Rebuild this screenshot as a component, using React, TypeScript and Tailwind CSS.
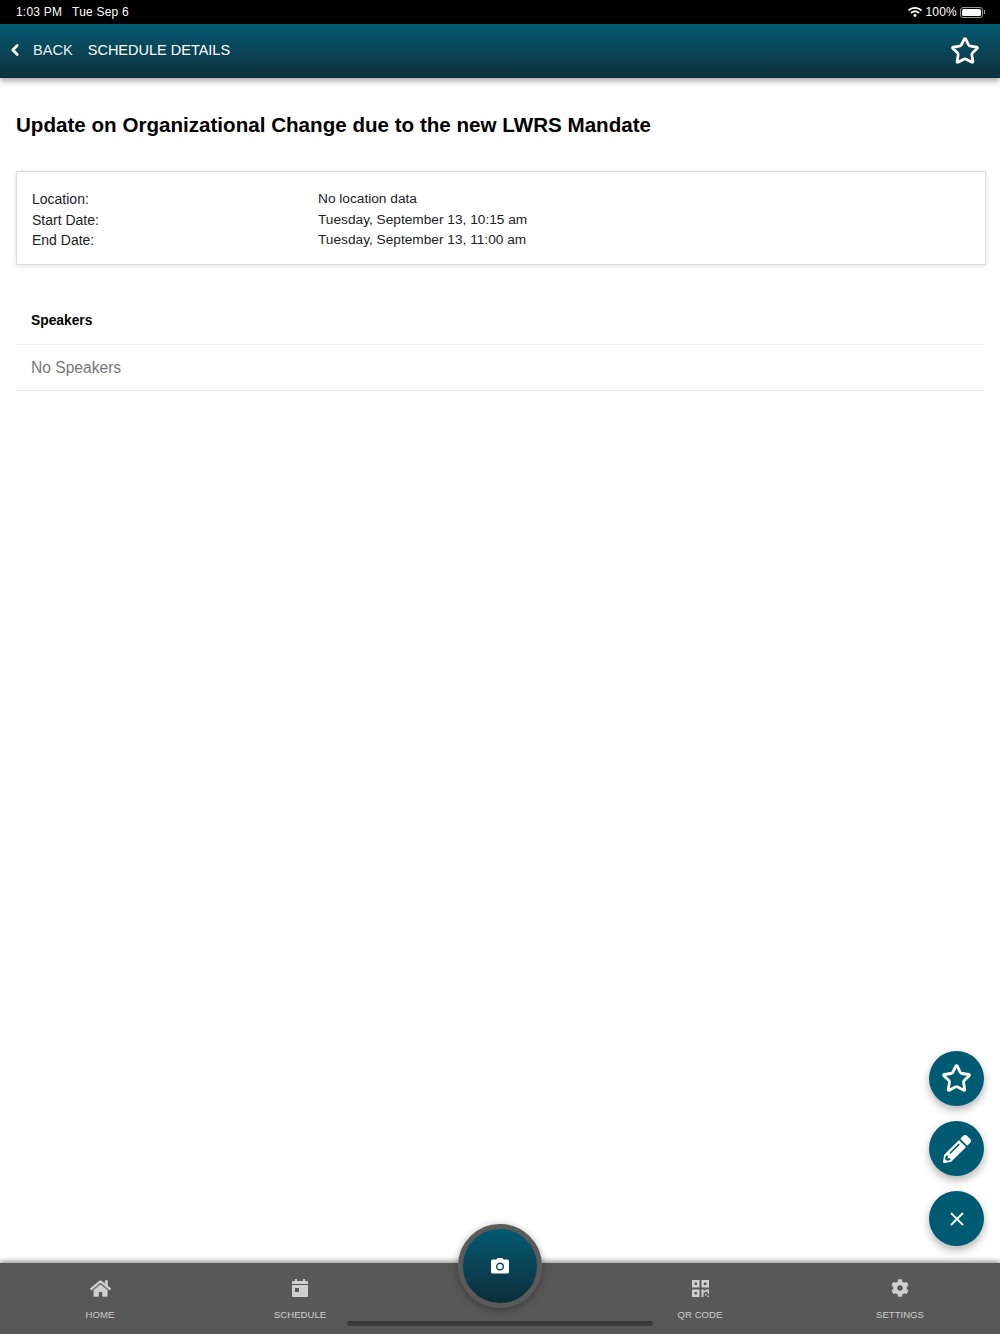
import { Star, ChevronLeft, X } from "lucide-react";
import { FaHome, FaCog, FaPencilAlt, FaWifi } from "react-icons/fa";

const CalendarIcon = () => (
  <svg width="16" height="18" viewBox="0 0 16 18" fill="#cfcfcf">
    <rect x="3" y="0" width="2" height="3" />
    <rect x="11" y="0" width="2" height="3" />
    <path d="M1 2h14a1 1 0 0 1 1 1v2H0V3a1 1 0 0 1 1-1z" />
    <path d="M0 6h16v11a1 1 0 0 1-1 1H1a1 1 0 0 1-1-1z" />
    <rect x="3" y="9" width="4" height="4" fill="#585858" />
  </svg>
);

const QrIcon = () => (
  <svg width="17" height="17" viewBox="0 0 17 17" fill="#cfcfcf">
    <path fillRule="evenodd" d="M0 0h7.500v7.500H0zM2.500 2.500v2.500H5V2.500z" />
    <path fillRule="evenodd" d="M9.500 0H17v7.500H9.500zM12 2.500v2.500h2.500V2.500z" />
    <path fillRule="evenodd" d="M0 9.500h7.500V17H0zM2.500 12v2.500H5V12z" />
    <path d="M9.500 9.500h2v7.500h-2zM11.500 10.500h2v2h-2zM13.500 9.500h3.500v4h-1.500v-2h-2zM13 14h1.500v1.500H13zM15.500 15.500H17V17h-1.500z" />
  </svg>
);

const CameraIcon = () => (
  <svg width="18" height="16" viewBox="0 0 18 16">
    <path fill="#fff" d="M5.500 1.500 6.500 0h5l1 1.500H16.500a1.500 1.500 0 0 1 1.500 1.500v11a1.500 1.500 0 0 1-1.500 1.500h-15A1.500 1.500 0 0 1 0 14V3a1.500 1.500 0 0 1 1.500-1.500z" />
    <circle cx="9" cy="8.500" r="3.300" fill="none" stroke="#0a4a5e" strokeWidth="1.400" />
  </svg>
);

const details = [
  { label: "Location:", value: "No location data" },
  { label: "Start Date:", value: "Tuesday, September 13, 10:15 am" },
  { label: "End Date:", value: "Tuesday, September 13, 11:00 am" },
];

const TabItem = ({ icon, label }: { icon: JSX.Element; label: string }) => (
  <div className="flex w-[200px] flex-col items-center">
    <div className="flex h-[18px] items-center justify-center">{icon}</div>
    <span className="mt-[12px] text-[9.600px] leading-[12px] text-[#cdcdcd]">{label}</span>
  </div>
);

export default function App() {
  return (
    <div className="relative flex h-[1334px] w-[1000px] flex-col overflow-hidden bg-white font-['Liberation_Sans',Arial,sans-serif]">
      <div className="flex h-6 items-center justify-between bg-black pl-4 pr-[15px] text-[12px] tracking-[0.2px] text-white">
        <div className="flex gap-[10px]">
          <span>1:03 PM</span>
          <span>Tue Sep 6</span>
        </div>
        <div className="flex items-center">
          <FaWifi className="mr-[4px] text-[14px]" />
          <span>100%</span>
          <div className="ml-[3px] flex h-[11px] w-[23px] items-center rounded-[3px] border border-[#999] p-[1px]">
            <div className="h-full w-full rounded-[1.5px] bg-white" />
          </div>
          <div className="ml-[1px] h-[4px] w-[1px] bg-[#999]" />
        </div>
      </div>

      <header className="z-10 flex h-[54px] items-center justify-between bg-gradient-to-b from-[#005a72] to-[#0d303c] pl-[6px] pr-[20px] text-white shadow-[0_3px_6px_rgba(0,0,0,0.35)]">
        <div className="flex items-center">
          <ChevronLeft className="-mt-[1px]" size={18} strokeWidth={3.500} />
          <span className="ml-[9px] text-[14.600px] text-[#e4eef1]">BACK</span>
          <span className="ml-[15px] text-[14.500px] font-medium">SCHEDULE DETAILS</span>
        </div>
        <Star size={30} strokeWidth={2.200} />
      </header>

      <main className="flex-1 px-4">
        <h1 className="mt-[35px] text-[20.600px] font-bold leading-[24px] text-black">
          Update on Organizational Change due to the new LWRS Mandate
        </h1>
        <div className="mt-[34px] h-[94px] w-[970px] border border-[#dcdcdc] px-[15px] pt-[17px] text-[13.700px] leading-[20.500px] text-[#222] shadow-[0_1px_5px_rgba(0,0,0,0.12)]">
          {details.map((row) => (
            <div key={row.label} className="flex">
              <span className="w-[286px] text-[14px]">{row.label}</span>
              <span>{row.value}</span>
            </div>
          ))}
        </div>
        <div className="mt-[33px] w-[968px]">
          <div className="flex h-[47px] items-center border-b border-[#eeeeee] pl-[15px] pt-[1px] text-[13.800px] font-bold text-black">
            Speakers
          </div>
          <div className="flex h-[46px] items-center border-b border-[#e8e8e8] pl-[15px] text-[15.600px] text-[#777]">
            No Speakers
          </div>
        </div>
      </main>

      <nav className="z-10 flex h-[71px] bg-[#585858] pt-[16px] shadow-[0_-2px_5px_rgba(0,0,0,0.4)]">
        <TabItem icon={<FaHome size={21} color="#cfcfcf" />} label="HOME" />
        <TabItem icon={<CalendarIcon />} label="SCHEDULE" />
        <div className="w-[200px]" />
        <TabItem icon={<QrIcon />} label="QR CODE" />
        <TabItem icon={<FaCog size={18} color="#cfcfcf" />} label="SETTINGS" />
      </nav>

      <div className="absolute left-[458px] top-[1224px] z-20 flex h-[84px] w-[84px] items-center justify-center rounded-full border-[5px] border-[#5a5a5a] bg-gradient-to-b from-[#005a72] to-[#0c2e3a] shadow-[0_2px_8px_rgba(0,0,0,0.35)]">
        <CameraIcon />
      </div>
      <div className="absolute bottom-[8px] left-[347px] z-20 h-[5px] w-[306px] rounded-full bg-[#3a3a3a]" />

      <div className="absolute left-[929px] top-[1051px] z-20 flex flex-col gap-[15px]">
        <div className="flex h-[55px] w-[55px] items-center justify-center rounded-full bg-[#005a72] text-white shadow-[0_4px_8px_rgba(0,0,0,0.3)]">
          <Star size={31} strokeWidth={2.200} />
        </div>
        <div className="flex h-[55px] w-[55px] items-center justify-center rounded-full bg-[#005a72] text-white shadow-[0_4px_8px_rgba(0,0,0,0.3)]">
          <FaPencilAlt size={28} />
        </div>
        <div className="flex h-[55px] w-[55px] items-center justify-center rounded-full bg-[#005a72] text-white shadow-[0_4px_8px_rgba(0,0,0,0.3)]">
          <X size={22} strokeWidth={2} />
        </div>
      </div>
    </div>
  );
}
